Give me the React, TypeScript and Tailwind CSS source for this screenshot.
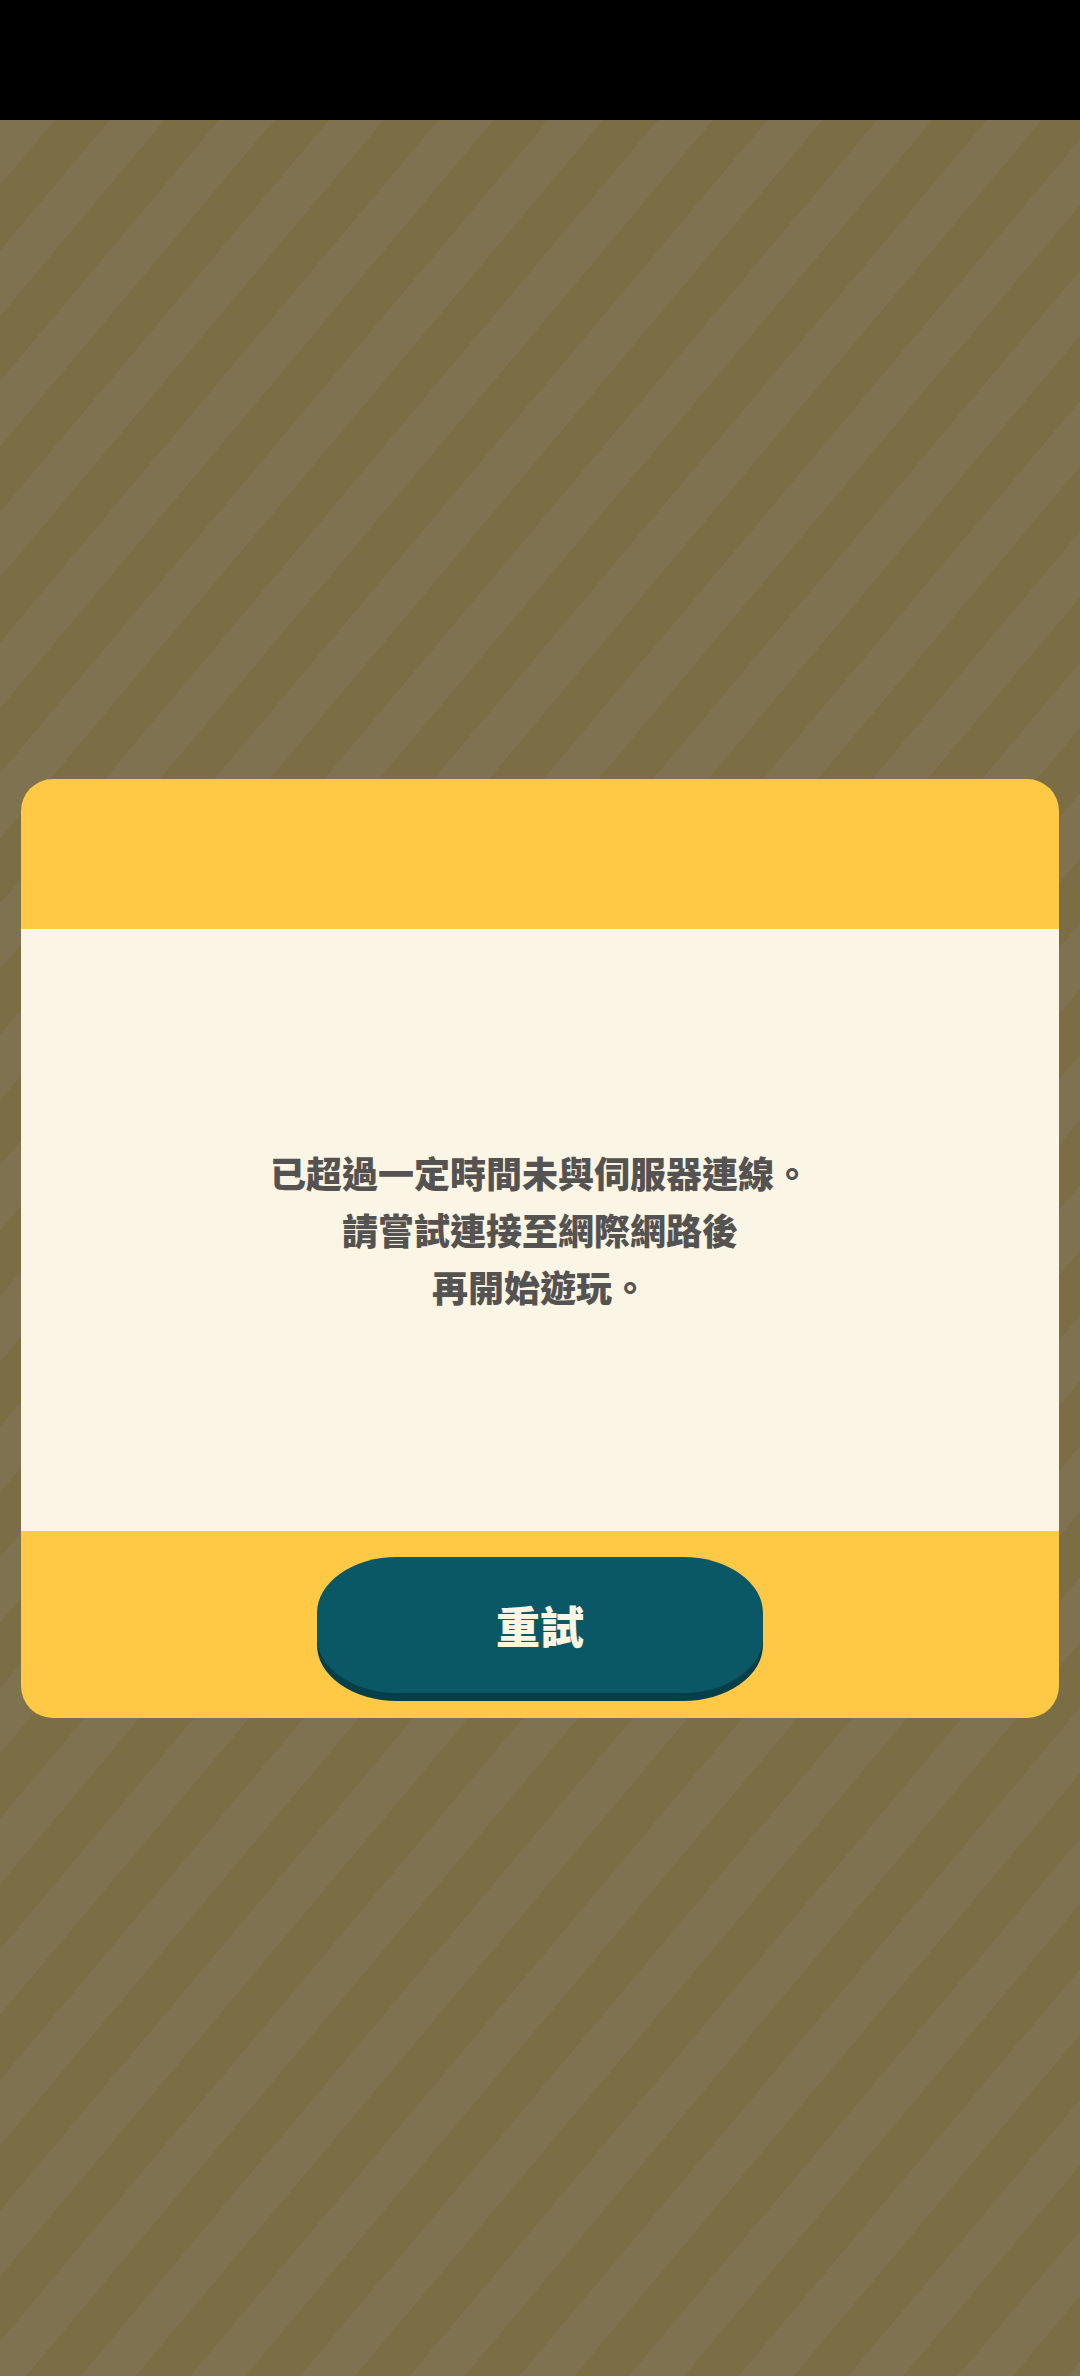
export default function App() {
  return (
    <div
      className="flex h-[2376px] w-[1080px] flex-col"
      style={{ fontFamily: '"Noto Sans CJK TC", "Noto Sans", sans-serif' }}
    >
      <div className="h-[120px] shrink-0 bg-black" />

      <div className="flex flex-1 items-center justify-center bg-[repeating-linear-gradient(130deg,#7f7250_0px,#7f7250_42px,#7c6e44_42px,#7c6e44_84px)] px-[21px]">
        <div className="flex w-full flex-col overflow-hidden rounded-[32px] bg-[#ffc845]">
          <div className="h-[150px]" />

          <div className="flex h-[602px] flex-col items-center justify-center bg-[#faf5e4] text-center text-[36px] leading-[57px] font-black text-[#555351]">
            <p>已超過一定時間未與伺服器連線。</p>
            <p>請嘗試連接至網際網路後</p>
            <p>再開始遊玩。</p>
          </div>

          <div className="flex h-[187px] justify-center pt-[26px]">
            <button className="flex h-[136px] w-[446px] items-center justify-center rounded-[80px/56px] bg-[#0a5866] text-[44px] font-black text-[#fdf6e3] shadow-[0_8px_0_#05404a]">
              重試
            </button>
          </div>
        </div>
      </div>
    </div>
  );
}
